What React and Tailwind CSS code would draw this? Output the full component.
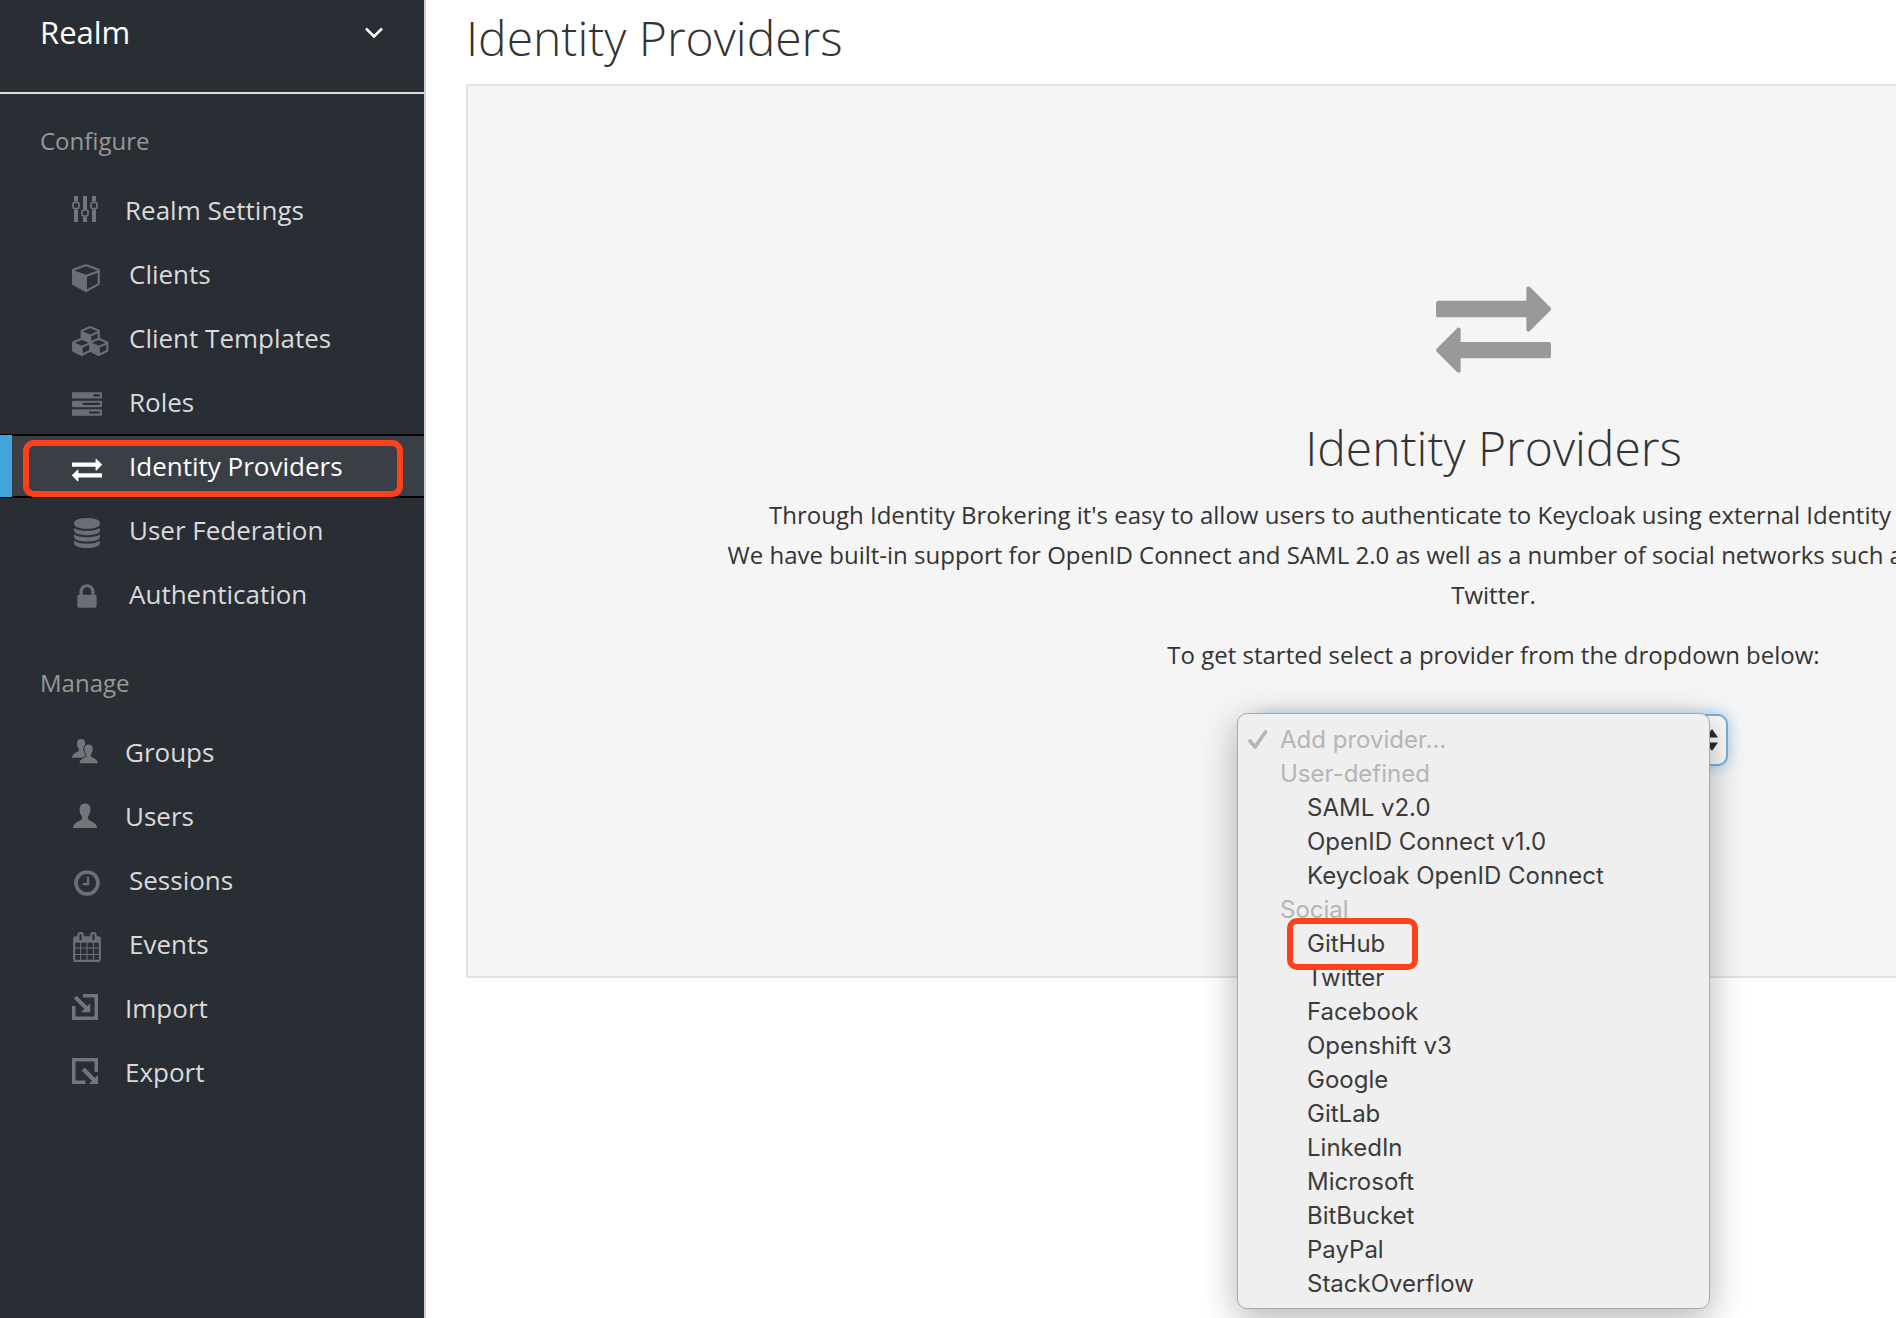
import React from "react";

const FA = {
  cube: "M896 1629l640-349v-636l-640 233v752zm-64-865l698-254-698-254-698 254zm832-252v768q0 35-18 65t-49 47l-704 384q-28 16-61 16t-61-16l-704-384q-31-17-49-47t-18-65v-768q0-40 23-73t61-47l704-256q22-8 44-8t44 8l704 256q38 14 61 47t23 73z",
  cubes:
    "M640 1632l384-192v-314l-384 164v342zm-64-454l404-173-404-173-404 173zm1088 454l384-192v-314l-384 164v342zm-64-454l404-173-404-173-404 173zm-448-293l384-165v-266l-384 164v267zm-64-379l441-189-441-189-441 189zm1088 518v416q0 36-19 67t-52 47l-448 224q-25 14-57 14t-57-14l-448-224q-4-2-7-4-2 2-7 4l-448 224q-25 14-57 14t-57-14l-448-224q-33-16-52-47t-19-67v-416q0-38 21.5-70t56.5-48l434-186v-400q0-38 21.5-70t56.5-48l448-192q23-10 50-10t50 10l448 192q35 16 56.5 48t21.5 70v400l434 186q36 16 57 48t21 70z",
  tasks:
    "M1024 1408h640v-128h-640v128zm-384-512h1024v-128h-1024v128zm640-512h384v-128h-384v128zm512 832v256q0 26-19 45t-45 19h-1664q-26 0-45-19t-19-45v-256q0-26 19-45t45-19h1664q26 0 45 19t19 45zm0-512v256q0 26-19 45t-45 19h-1664q-26 0-45-19t-19-45v-256q0-26 19-45t45-19h1664q26 0 45 19t19 45zm0-512v256q0 26-19 45t-45 19h-1664q-26 0-45-19t-19-45v-256q0-26 19-45t45-19h1664q26 0 45 19t19 45z",
  exchange:
    "M1792 1184v192q0 13-9.5 22.5t-22.5 9.5h-1376v192q0 13-9.5 22.5t-22.5 9.5q-12 0-24-10l-319-320q-9-9-9-22 0-14 9-23l320-320q9-9 23-9 13 0 22.5 9.5t9.5 22.5v192h1376q13 0 22.5 9.5t9.5 22.5zm0-544q0 14-9 23l-320 320q-9 9-23 9-13 0-22.5-9.5t-9.5-22.5v-192h-1376q-13 0-22.5-9.5t-9.5-22.5v-192q0-13 9.5-22.5t22.5-9.5h1376v-192q0-14 9-23t23-9q12 0 24 10l319 319q9 9 9 23z",
  database:
    "M896 768q237 0 443-43t325-127v170q0 69-103 128t-280 93.5-385 34.5-385-34.5-280-93.5-103-128v-170q119 84 325 127t443 43zm0 768q237 0 443-43t325-127v170q0 69-103 128t-280 93.5-385 34.5-385-34.5-280-93.5-103-128v-170q119 84 325 127t443 43zm0-384q237 0 443-43t325-127v170q0 69-103 128t-280 93.5-385 34.5-385-34.5-280-93.5-103-128v-170q119 84 325 127t443 43zm0-1152q208 0 385 34.5t280 93.5 103 128v128q0 69-103 128t-280 93.5-385 34.5-385-34.5-280-93.5-103-128v-128q0-69 103-128t280-93.5 385-34.5z",
  lock: "M640 768h512v-192q0-106-75-181t-181-75-181 75-75 181v192zm832 96v576q0 40-28 68t-68 28h-960q-40 0-68-28t-28-68v-576q0-40 28-68t68-28h32v-192q0-184 132-316t316-132 316 132 132 316v192h32q40 0 68 28t28 68z",
  clock:
    "M1024 544v448q0 14-9 23t-23 9h-320q-14 0-23-9t-9-23v-64q0-14 9-23t23-9h224v-352q0-14 9-23t23-9h64q14 0 23 9t9 23zm416 352q0-148-73-273t-198-198-273-73-273 73-198 198-73 273 73 273 198 198 273 73 273-73 198-198 73-273zm224 0q0 209-103 385.5t-279.5 279.5-385.5 103-385.5-103-279.5-279.5-103-385.5 103-385.5 279.5-279.5 385.5-103 385.5 103 279.5 279.5 103 385.5z",
  calendar:
    "M192 1664h288v-288h-288v288zm352 0h320v-288h-320v288zm-352-352h288v-320h-288v320zm352 0h320v-320h-320v320zm-352-384h288v-288h-288v288zm736 736h320v-288h-320v288zm-384-736h320v-288h-320v288zm768 736h288v-288h-288v288zm-384-352h320v-320h-320v320zm-352-864v-288q0-13-9.5-22.5t-22.5-9.5h-64q-13 0-22.5 9.5t-9.5 22.5v288q0 13 9.5 22.5t22.5 9.5h64q13 0 22.5-9.5t9.5-22.5zm736 864h288v-320h-288v320zm-384-384h320v-288h-320v288zm384 0h288v-288h-288v288zm32-480v-288q0-13-9.5-22.5t-22.5-9.5h-64q-13 0-22.5 9.5t-9.5 22.5v288q0 13 9.5 22.5t22.5 9.5h64q13 0 22.5-9.5t9.5-22.5zm384-64v1280q0 52-38 90t-90 38h-1408q-52 0-90-38t-38-90v-1280q0-52 38-90t90-38h128v-96q0-66 47-113t113-47h64q66 0 113 47t47 113v96h384v-96q0-66 47-113t113-47h64q66 0 113 47t47 113v96h128q52 0 90 38t38 90z",
};

const PERSON =
  "M12 0C15.800 0 17.600 2.600 17.400 6.200C17.300 9.800 16.200 11.600 15 13V15.600C15.400 17 23.800 18.600 24 24.600H0C.2 18.600 8.600 17 9 15.600V13C7.800 11.600 6.700 9.800 6.600 6.200C6.400 2.600 8.200 0 12 0Z";

const PF = {
  sliders: (
    <g>
      <path d="M2 0h4v5.500h-4zM2 13.500h4v12.500h-4zM11 0h4v13.500h-4zM11 21h4v5h-4zM20 0h4v5.500h-4zM20 13.500h4v12.500h-4z" />
      <g fill="none" stroke="currentColor" strokeWidth="1.700">
        <rect x="1" y="6.500" width="6" height="6" rx="1.500" />
        <rect x="10" y="14" width="6" height="6" rx="1.500" />
        <rect x="19" y="6.500" width="6" height="6" rx="1.500" />
      </g>
    </g>
  ),
  groups: (
    <g>
      <path transform="translate(0 1) scale(.76)" d={PERSON} />
      <path
        transform="translate(7.500 6.500) scale(.76)"
        d={PERSON}
        stroke="#292d34"
        strokeWidth="2.400"
        paintOrder="stroke"
      />
    </g>
  ),
  user: <path transform="translate(1 1.400)" d={PERSON} />,
  import: (
    <g>
      <path d="M11 0H26V26H0V12H3.500V22.500H22.500V3.500H11Z" />
      <path d="M1.800 4.600L4.600 1.800L15.300 12.200L18.300 9.200V18.300H9.200L12.300 15.100Z" />
    </g>
  ),
  export: (
    <g>
      <path d="M0 0H26V14H22.500V3.500H3.500V22.500H13.500V26H0Z" />
      <path d="M9.800 12.400L12.600 9.600L23 19.900L26 16.900V26H16.900L20 22.900Z" />
    </g>
  ),
};

const configure = [
  { label: "Realm Settings", pf: "sliders" },
  { label: "Clients", fa: "cube" },
  { label: "Client Templates", fa: "cubes" },
  { label: "Roles", fa: "tasks" },
  { label: "Identity Providers", fa: "exchange", active: true },
  { label: "User Federation", fa: "database" },
  { label: "Authentication", fa: "lock" },
];

const manage = [
  { label: "Groups", pf: "groups" },
  { label: "Users", pf: "user" },
  { label: "Sessions", fa: "clock" },
  { label: "Events", fa: "calendar" },
  { label: "Import", pf: "import" },
  { label: "Export", pf: "export" },
];

const groups = [
  { name: "User-defined", items: ["SAML v2.0", "OpenID Connect v1.0", "Keycloak OpenID Connect"] },
  {
    name: "Social",
    items: [
      "GitHub",
      "Twitter",
      "Facebook",
      "Openshift v3",
      "Google",
      "GitLab",
      "LinkedIn",
      "Microsoft",
      "BitBucket",
      "PayPal",
      "StackOverflow",
    ],
  },
];

function NavIcon({ fa, pf, active }) {
  if (fa) {
    return (
      <span className={active ? "w-[57px] shrink-0 pt-1.5 text-white" : "w-[57px] shrink-0 pt-1.5 text-[#6a6e79]"}>
        <svg className="block size-[30px] overflow-visible" viewBox="0 0 1792 1792" fill="currentColor" aria-hidden="true">
          <path d={FA[fa]} />
        </svg>
      </span>
    );
  }
  return (
    <span className="w-[53px] shrink-0 pb-0.5 text-[#72767b]">
      <svg className="block size-[26px]" viewBox="0 0 26 26" fill="currentColor" aria-hidden="true">
        {PF[pf]}
      </svg>
    </span>
  );
}

function NavSection({ title, items }) {
  return (
    <section>
      <h2 className="px-10 text-[24px] leading-10 text-[#989896]">{title}</h2>
      <ul className="mt-[17px]">
        {items.map((item) => (
          <li key={item.label}>
            <a
              href="#"
              aria-current={item.active ? "page" : undefined}
              className={
                item.active
                  ? "relative flex h-16 items-center border-y-2 border-black bg-[#3a3e45] pl-[72px] text-[26px] text-white"
                  : "flex h-16 items-center pl-[72px] text-[26px] text-[#dadada]"
              }
            >
              {item.active && <span className="absolute -inset-y-px left-0 w-3 bg-[#41a5dc]" />}
              <NavIcon {...item} />
              <span>{item.label}</span>
              {item.active && (
                <span className="absolute top-1 right-[21px] -bottom-px left-[23px] rounded-[11px] border-6 border-[#ff401c]" />
              )}
            </a>
          </li>
        ))}
      </ul>
    </section>
  );
}

function Sidebar() {
  return (
    <aside className="w-[426px] shrink-0 border-r-2 border-[#cfcfcf] bg-[#292d34]">
      <button
        type="button"
        className="flex w-full items-center justify-between border-b-2 border-[#dcdcdc] pt-3 pr-10 pb-10 pl-10 text-left text-[31px] leading-10 text-white"
      >
        Realm
        <svg className="mt-0.5 h-3 w-5" viewBox="0 0 20 12" fill="none" stroke="currentColor" strokeWidth="2.500" aria-hidden="true">
          <path d="M2 1.500L10 9.500L18 1.500" />
        </svg>
      </button>
      <nav className="flex flex-col gap-[37px] pt-[27px]">
        <NavSection title="Configure" items={configure} />
        <NavSection title="Manage" items={manage} />
      </nav>
    </aside>
  );
}

function ProviderPicker() {
  return (
    <div className="relative mt-[39px] w-[469px] text-left font-['Inter',sans-serif]">
      <select
        aria-label="Add provider"
        className="block h-[52px] w-full appearance-none rounded-[10px] border-2 border-[#76b0de] bg-[#fafafa] px-4 text-[24px] text-[#333] shadow-[0_0_14px_rgba(102,175,233,0.6)] outline-none"
      >
        <option>Add provider...</option>
      </select>
      <svg
        className="pointer-events-none absolute top-[15px] right-2.5 h-[22px] w-3"
        viewBox="0 0 12 22"
        fill="#2b2b2b"
        aria-hidden="true"
      >
        <path d="M6 0L12 8.500H0ZM6 22L12 13.500H0Z" />
      </svg>
      <ul
        role="listbox"
        aria-label="Providers"
        className="absolute -top-px right-[18px] -left-[22px] rounded-[10px] border border-[#a9a9a9] bg-[#efefef] pt-[9px] pb-[7px] text-[24px] leading-[34px] text-[#3b3b3b] shadow-[0_10px_36px_rgba(0,0,0,0.3)]"
      >
        <li role="option" aria-selected="true" className="flex items-center text-[#b5b5b5]">
          <span className="w-[42px] pl-2.5">
            <svg className="h-5 w-5" viewBox="0 0 20 20" fill="none" stroke="currentColor" strokeWidth="3.600" aria-hidden="true">
              <path d="M2 11L7 17L17.500 2" strokeLinecap="round" strokeLinejoin="round" />
            </svg>
          </span>
          Add provider...
        </li>
        {groups.map((group) => (
          <li key={group.name} role="group" aria-label={group.name}>
            <span className="block pl-[42px] text-[#b5b5b5]">{group.name}</span>
            {group.items.map((item) => (
              <button key={item} type="button" role="option" aria-selected="false" className="relative block w-full pl-[69px] text-left">
                {item}
                {item === "GitHub" && (
                  <span className="absolute -top-[9px] left-[49px] z-10 h-[52px] w-[131px] rounded-[10px] border-6 border-[#ff401c]" />
                )}
              </button>
            ))}
          </li>
        ))}
      </ul>
    </div>
  );
}

export default function App() {
  return (
    <div className="flex h-screen overflow-hidden bg-white font-['Open_Sans',sans-serif] text-[#333]">
      <Sidebar />
      <main className="min-w-0 flex-1 overflow-hidden pt-3 pl-10">
        <h1 className="mb-5 text-[48px] leading-[52px] font-light">Identity Providers</h1>
        <div className="flex min-w-[2055px] flex-col items-center border-2 border-[#e2e2e2] bg-[#f5f5f5] pt-[182px] pb-[210px] text-center text-[24px] leading-10">
          <svg className="mb-[39px] size-[115px] text-[#999]" viewBox="0 0 1792 1792" fill="currentColor" aria-hidden="true">
            <path d={FA.exchange} />
          </svg>
          <h2 className="mb-[21px] text-[48px] leading-[52px] font-light">Identity Providers</h2>
          <p className="mb-5">
            Through Identity Brokering it's easy to allow users to authenticate to Keycloak using external Identity
            Providers or Social Networks
            <br />
            We have built-in support for OpenID Connect and SAML 2.0 as well as a number of social networks such as
            Google, GitHub, Facebook and
            <br />
            Twitter.
          </p>
          <p>To get started select a provider from the dropdown below:</p>
          <ProviderPicker />
        </div>
      </main>
    </div>
  );
}
